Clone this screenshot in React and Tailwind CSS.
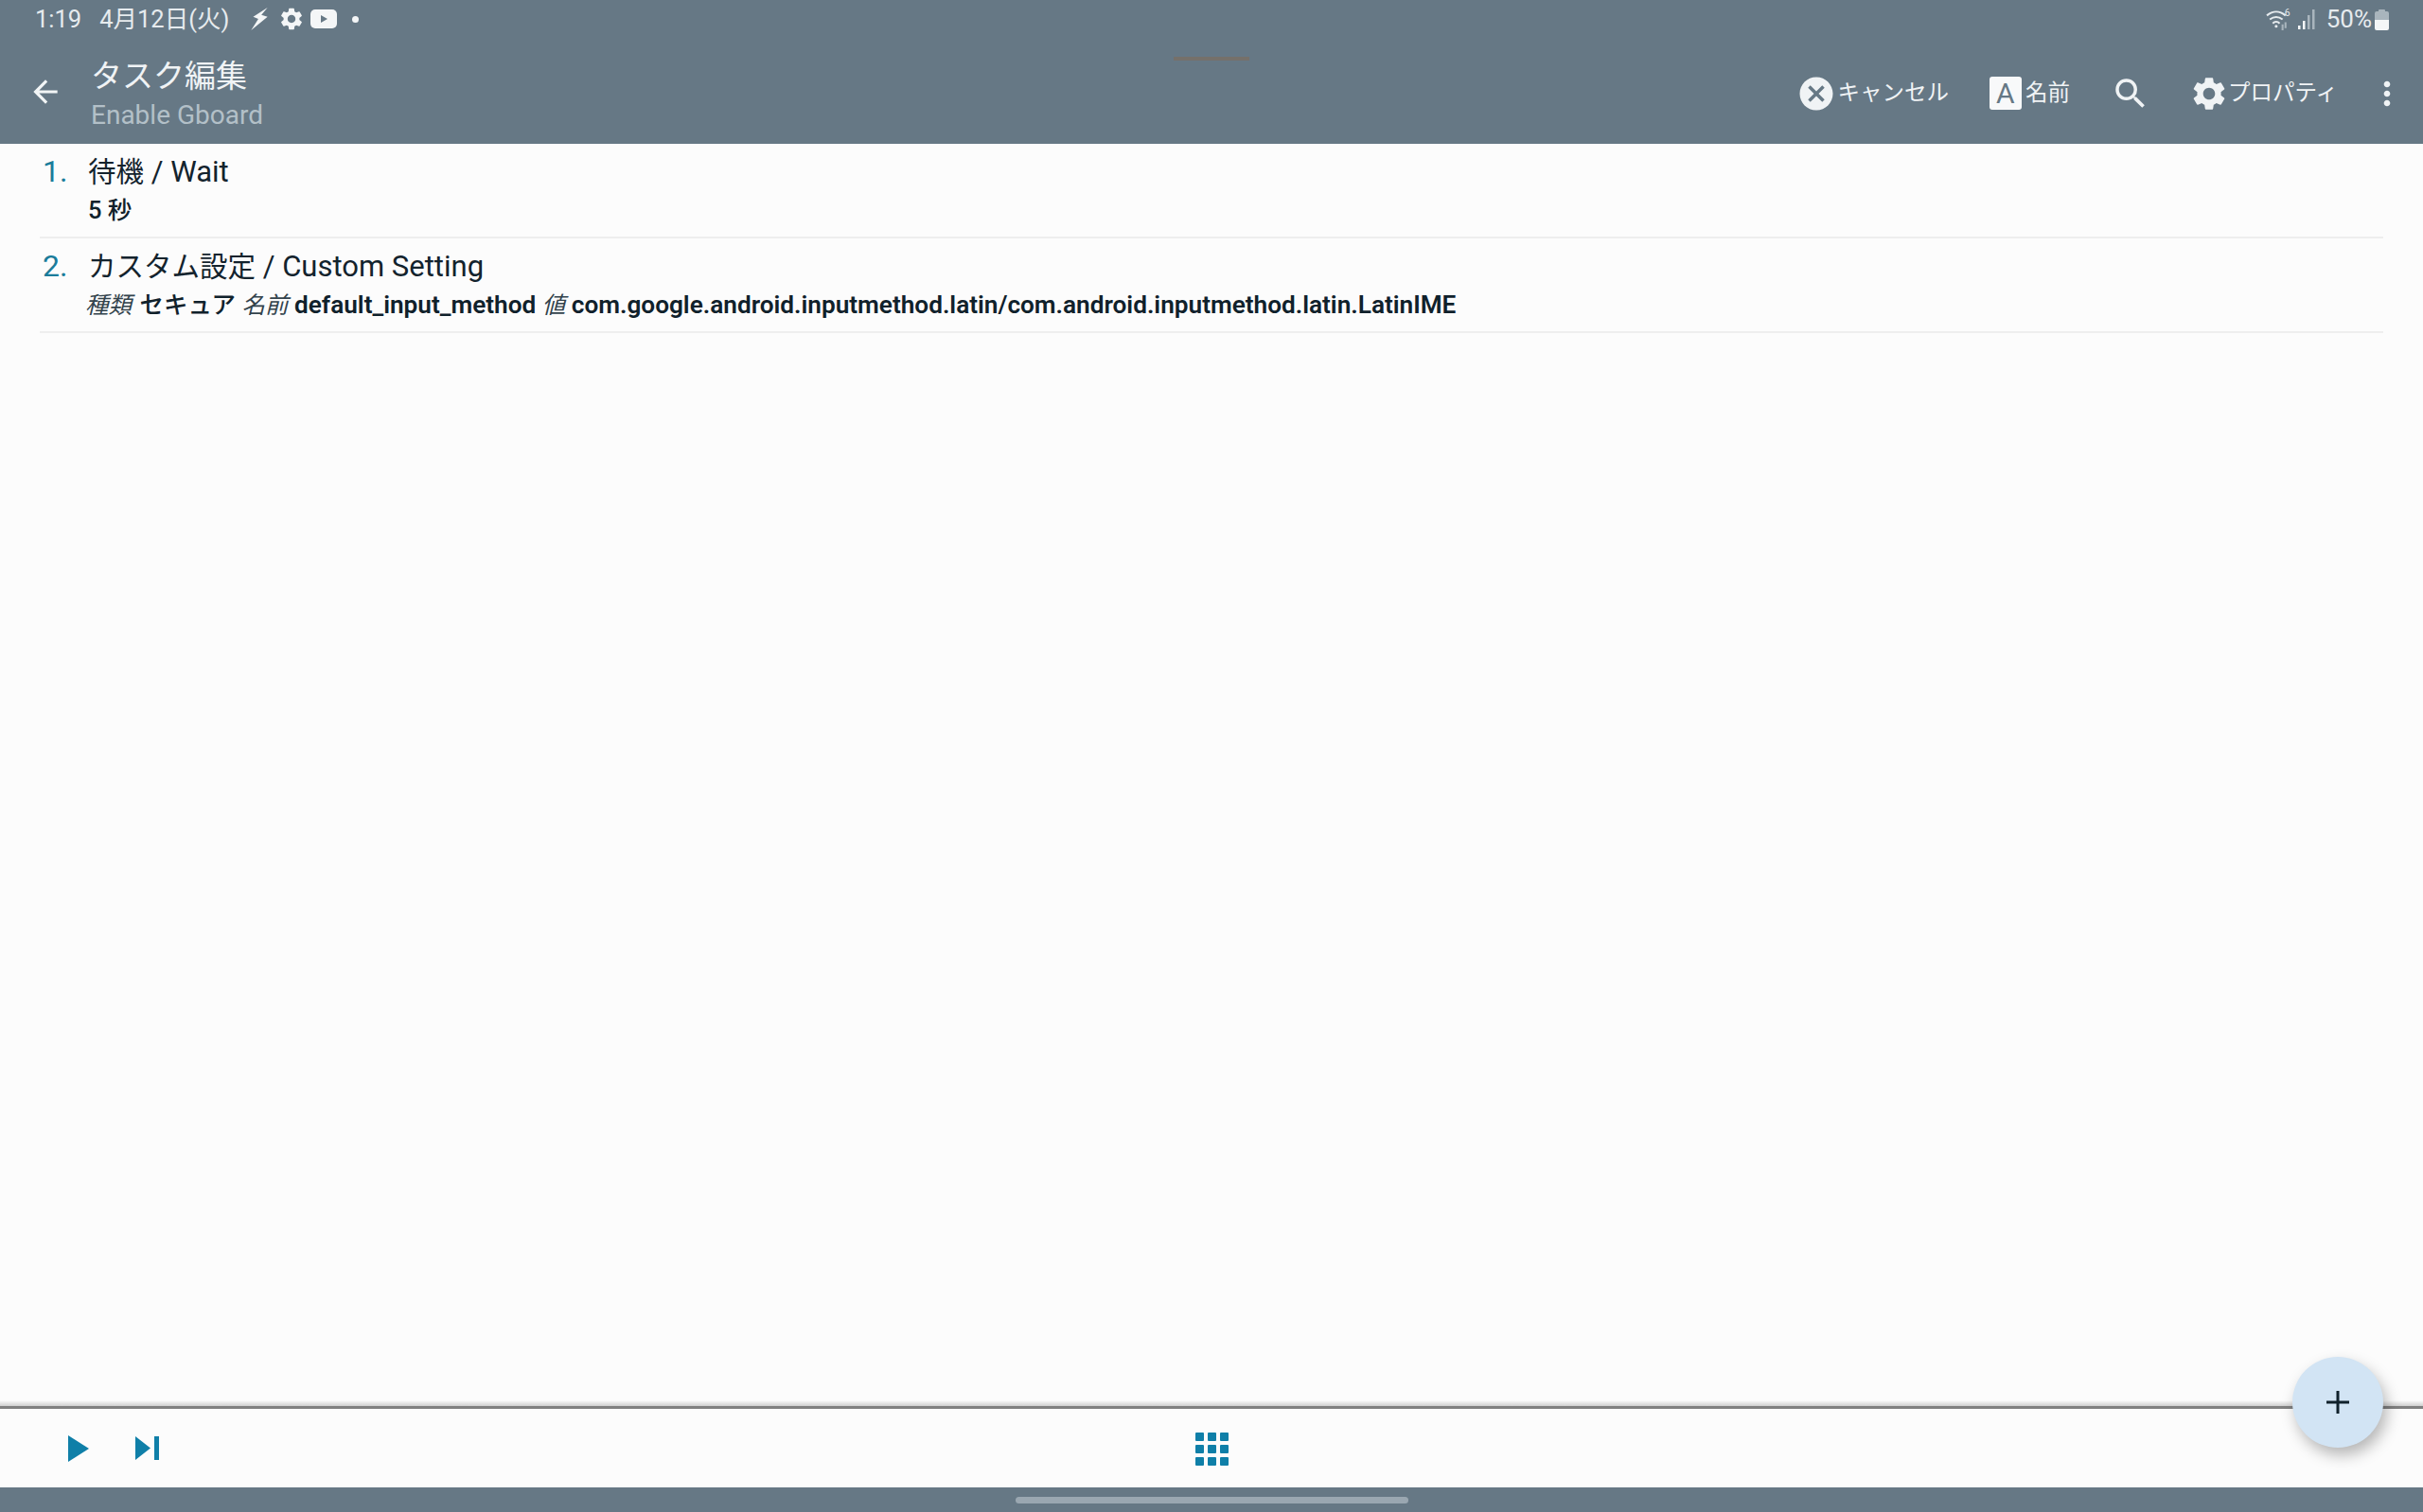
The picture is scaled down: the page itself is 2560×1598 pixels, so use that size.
import React from 'react';
import { MdArrowBack, MdCancel, MdMoreVert, MdSearch, MdSettings } from 'react-icons/md';

const StatusBar = () => (
    <div className="h-[40px] flex items-center pl-[37px] pr-[36px] text-[#e6ebee] text-[25.5px] leading-none">
        <span className="mt-[1px]">1:19</span>
        <span className="ml-[19px] mt-[1px]">4月12日(火)</span>
        <svg className="ml-[22px]" width="20" height="26" viewBox="0 0 18 24" fill="#f4f6f7">
            <path d="M17 1 3 10l5 2-7 11 16-13-6-2z" />
        </svg>
        <MdSettings className="ml-[10px] text-[#f4f6f7]" size={28} />
        <svg className="ml-[6px]" width="28" height="20" viewBox="0 0 28 20">
            <rect width="28" height="20" rx="5" fill="#f4f6f7" />
            <path d="M11 6v8l7-4z" fill="#667885" />
        </svg>
        <span className="ml-[16px] w-[7px] h-[7px] rounded-full bg-[#f4f6f7]" />
        <div className="ml-auto flex items-center">
            <svg width="28" height="25" viewBox="0 0 27 24" fill="none" stroke="#e6ebee" strokeWidth="2">
                <path d="M1 8c6-5 13-5 19 0M4 12c4-3 9-3 13 0M7 16c2-2 5-2 7 0" />
                <circle cx="10.5" cy="19" r="1.5" fill="#e6ebee" stroke="none" />
                <path d="M17 17v6M20 15v6" stroke="#a9b5bd" />
                <text x="19" y="9" fill="#e6ebee" stroke="none" fontSize="10" fontFamily="Roboto, sans-serif">6</text>
            </svg>
            <svg className="ml-[5px]" width="20" height="24" viewBox="0 0 20 24">
                <rect x="1" y="19" width="2.5" height="4" fill="#f4f6f7" />
                <rect x="6" y="14" width="2.5" height="9" fill="#f4f6f7" />
                <rect x="11" y="8" width="2.5" height="15" fill="#a9b5bd" />
                <rect x="16" y="2" width="2.5" height="21" fill="#a9b5bd" />
            </svg>
            <span className="ml-[11px] text-[26px]">50%</span>
            <svg className="ml-[3px]" width="15" height="23" viewBox="0 0 15 23">
                <path d="M4 2a1 1 0 0 1 1-1h5a1 1 0 0 1 1 1v1h2a2 2 0 0 1 2 2v7H0V5a2 2 0 0 1 2-2h2z" fill="#a9b5bd" />
                <path d="M0 12h15v9a2 2 0 0 1-2 2H2a2 2 0 0 1-2-2z" fill="#f4f6f7" />
            </svg>
        </div>
    </div>
);

const ActionBar = () => (
    <div className="h-[112px] flex items-center text-white relative">
        <button className="ml-[29px] w-[38px] flex justify-center mt-[2px]">
            <MdArrowBack size={40} className="text-[#f2f5f6]" />
        </button>
        <div className="ml-[29px] mt-[10px]">
            <div className="text-[33px] leading-[40px] text-[#f0f3f5]">タスク編集</div>
            <div className="text-[28px] leading-[41px] text-[#b3c0c8]">Enable Gboard</div>
        </div>
        <div className="ml-auto flex items-center h-full mt-[5px] text-[23.5px] text-[#f0f3f5]">
            <MdCancel size={42} className="-mx-[3.5px]" />
            <span className="ml-[5px]">キャンセル</span>
            <span className="ml-[43px] w-[34px] h-[35px] bg-[#f8f9fa] rounded-[3px] flex items-center justify-center text-[#667885] text-[30px]">A</span>
            <span className="ml-[4px]">名前</span>
            <MdSearch size={42} className="ml-[43px]" />
            <MdSettings size={42} className="ml-[41px]" />
            <span className="-ml-[1px]">プロパティ</span>
            <MdMoreVert size={40} className="ml-[32px] mr-[18px]" />
        </div>
    </div>
);

const Step = ({ no, title, children }) => (
    <div className="h-[100px] border-b-2 border-[#eeeeee] flex">
        <div className="w-[51px] pl-[3px] pt-[10px] text-[32px] leading-[38px] text-[#1a7c9b]">{no}</div>
        <div>
            <div className="pt-[11px] text-[31px] leading-[38px] text-[#13232d]">{title}</div>
            <div className="mt-[4px] text-[26.2px] leading-[34px] font-semibold text-[#10212b] whitespace-nowrap">{children}</div>
        </div>
    </div>
);

const Jp = ({ children }) => <span className="text-[29.5px]">{children}</span>;
const Label = ({ children }) => <i className="font-normal text-[24.5px] text-[#33434c]">{children}</i>;
const Kana = ({ children }) => <span className="text-[25.5px] font-medium">{children}</span>;

export default function App() {
    return (
        <div className="w-[2560px] h-[1598px] relative overflow-hidden flex flex-col bg-[#fcfcfc] font-['Roboto','Noto_Sans_CJK_JP',sans-serif]">
            <header className="bg-[#667885] relative">
                <StatusBar />
                <ActionBar />
                <div className="absolute left-[1240px] top-[60px] w-[80px] h-[4px] bg-[#75706a]" />
            </header>

            <main className="flex-1 pl-[42px] pr-[42px]">
                <Step no="1." title={<><Jp>待機</Jp> / Wait</>}><Kana>5 秒</Kana></Step>
                <Step no="2." title={<><Jp>カスタム設定</Jp> / Custom Setting</>}>
                    <span className="-ml-[3px]"><Label>種類</Label></span> <span className="ml-[2px]"><Kana>セキュア</Kana></span> <Label>名前</Label> default_input_method <Label>値</Label> com.google.android.inputmethod.latin/com.android.inputmethod.latin.LatinIME
                </Step>
            </main>

            <footer className="h-[86px] border-t-[3px] border-[#808080] flex items-center relative">
                <div className="absolute left-0 right-0 -top-[9px] h-[6px] bg-gradient-to-b from-[#fcfcfc] to-[#cfcfcf]" />
                <svg className="ml-[72px]" width="22" height="28" viewBox="0 0 22 28" fill="#0f7fa8">
                    <path d="M0 0l22 14L0 28z" />
                </svg>
                <svg className="ml-[49px]" width="25" height="25" viewBox="0 0 25 25" fill="#0f7fa8">
                    <path d="M0 0l16 12.5L0 25zM20 0h5v25h-5z" />
                </svg>
                <div className="absolute left-[1263px] top-[25px] grid grid-cols-3 gap-[4px]">
                    {Array.from({ length: 9 }).map((_, i) => (
                        <span key={i} className="w-[9px] h-[9px] bg-[#0f7fa8] rounded-[1px]" />
                    ))}
                </div>
            </footer>

            <div className="h-[26px] bg-[#667885] flex justify-center items-center">
                <div className="w-[415px] h-[7px] rounded-full bg-[#9aa7b1]" />
            </div>

            <button className="absolute left-[2422px] top-[1434px] w-[96px] h-[96px] rounded-full bg-[#d2e4f4] shadow-[4px_8px_16px_rgba(0,0,0,0.28)] flex items-center justify-center">
                <svg width="26" height="26" viewBox="0 0 26 26" stroke="#10212b" strokeWidth="3">
                    <path d="M13 1v24M1 13h24" />
                </svg>
            </button>
        </div>
    );
}
